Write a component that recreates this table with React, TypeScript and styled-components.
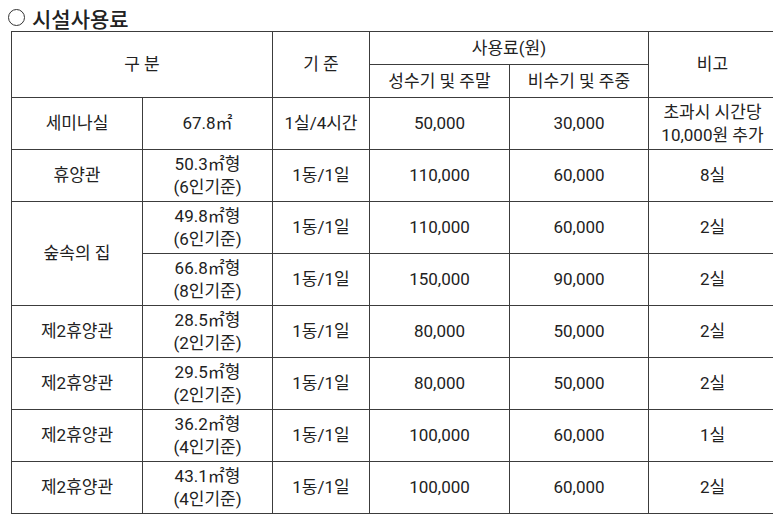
import React from 'react';
import styled, { createGlobalStyle } from 'styled-components';

const GlobalStyle = createGlobalStyle`
  html, body {
    margin: 0;
    padding: 0;
    background: #ffffff;
    overflow: hidden;
  }
  body {
    font-family: Roboto, "Noto Sans CJK KR", "Noto Sans", sans-serif;
    color: #222;
  }
`;

const Page = styled.div`
  width: 773px;
  padding: 4px 0 0 5px;
  box-sizing: border-box;
`;

const Title = styled.h2`
  margin: 0;
  height: 27px;
  display: flex;
  align-items: center;
  gap: 7px;
  font-family: "Noto Sans CJK KR", sans-serif;
  font-size: 21px;
  font-weight: 500;
  color: #222;
`;

const Circle = styled.span`
  display: inline-block;
  width: 15px;
  height: 15px;
  border: 1.7px solid #333;
  border-radius: 50%;
  margin-left: 3px;
`;

const Table = styled.table`
  margin-left: 6px;
  width: 765px;
  border-collapse: collapse;
  table-layout: fixed;
  font-size: 17px;
  line-height: 23px;
`;

const HeadRow = styled.tr`
  height: 33px;
`;

const BodyRow = styled.tr`
  height: 52px;
`;

const Cell = styled.td`
  border: 1px solid #3c3c3c;
  padding: 0;
  text-align: center;
  vertical-align: middle;
  font-weight: 400;
  color: #222;
  white-space: nowrap;
`;

type Row = {
  name?: string;
  nameSpan?: number;
  area: string;
  cap?: string;
  unit: string;
  peak: string;
  off: string;
  note: React.ReactNode;
};

const rows: Row[] = [
  { name: '세미나실', area: '67.8㎡', unit: '1실/4시간', peak: '50,000', off: '30,000', note: <>초과시 시간당<br />10,000원 추가</> },
  { name: '휴양관', area: '50.3㎡형', cap: '(6인기준)', unit: '1동/1일', peak: '110,000', off: '60,000', note: '8실' },
  { name: '숲속의 집', nameSpan: 2, area: '49.8㎡형', cap: '(6인기준)', unit: '1동/1일', peak: '110,000', off: '60,000', note: '2실' },
  { area: '66.8㎡형', cap: '(8인기준)', unit: '1동/1일', peak: '150,000', off: '90,000', note: '2실' },
  { name: '제2휴양관', area: '28.5㎡형', cap: '(2인기준)', unit: '1동/1일', peak: '80,000', off: '50,000', note: '2실' },
  { name: '제2휴양관', area: '29.5㎡형', cap: '(2인기준)', unit: '1동/1일', peak: '80,000', off: '50,000', note: '2실' },
  { name: '제2휴양관', area: '36.2㎡형', cap: '(4인기준)', unit: '1동/1일', peak: '100,000', off: '60,000', note: '1실' },
  { name: '제2휴양관', area: '43.1㎡형', cap: '(4인기준)', unit: '1동/1일', peak: '100,000', off: '60,000', note: '2실' },
];

const App: React.FC = () => (
  <Page>
    <GlobalStyle />
    <Title>
      <Circle />
      시설사용료
    </Title>
    <Table>
      <colgroup>
        <col style={{ width: 131 }} />
        <col style={{ width: 130 }} />
        <col style={{ width: 97 }} />
        <col style={{ width: 140 }} />
        <col style={{ width: 139 }} />
        <col style={{ width: 128 }} />
      </colgroup>
      <thead>
        <HeadRow>
          <Cell as="th" colSpan={2} rowSpan={2}>구 분</Cell>
          <Cell as="th" rowSpan={2}>기 준</Cell>
          <Cell as="th" colSpan={2}>사용료(원)</Cell>
          <Cell as="th" rowSpan={2}>비고</Cell>
        </HeadRow>
        <HeadRow>
          <Cell as="th">성수기 및 주말</Cell>
          <Cell as="th">비수기 및 주중</Cell>
        </HeadRow>
      </thead>
      <tbody>
        {rows.map((r, i) => (
          <BodyRow key={i}>
            {r.name && <Cell rowSpan={r.nameSpan}>{r.name}</Cell>}
            <Cell>
              {r.area}
              {r.cap && <><br />{r.cap}</>}
            </Cell>
            <Cell>{r.unit}</Cell>
            <Cell>{r.peak}</Cell>
            <Cell>{r.off}</Cell>
            <Cell>{r.note}</Cell>
          </BodyRow>
        ))}
      </tbody>
    </Table>
  </Page>
);

export default App;
